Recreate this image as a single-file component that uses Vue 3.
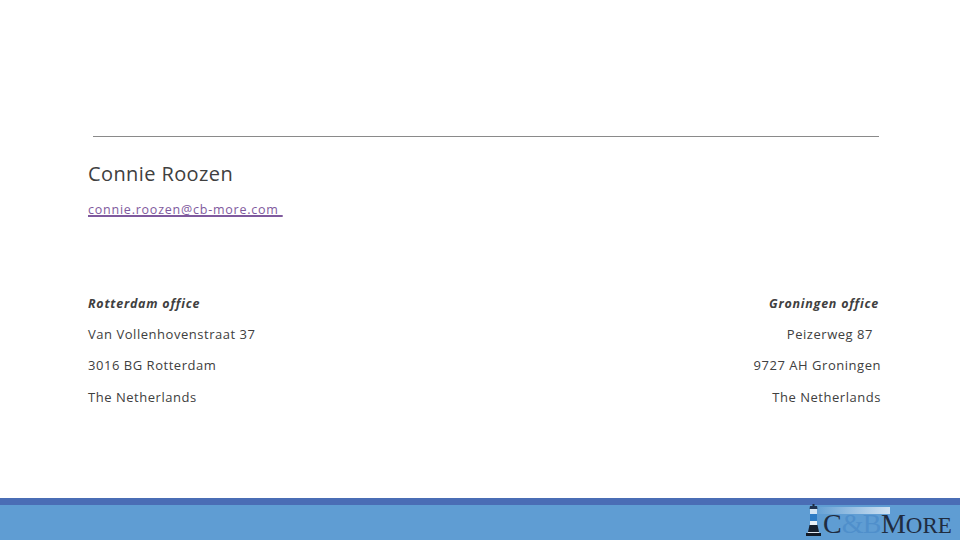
<script setup>
const left = ['Van Vollenhovenstraat 37', '3016 BG Rotterdam', 'The Netherlands']
const right = [
  { text: 'Peizerweg 87', cls: 'r-street' },
  { text: '9727 AH Groningen', cls: 'r-city' },
  { text: 'The Netherlands', cls: 'r-country' }
]
</script>

<template>
  <div class="slide">
    <main class="content">
      <div class="rule"></div>
      <h1 class="name">Connie Roozen</h1>
      <a class="mail" href="#">connie.roozen@cb-more.com </a>
      <section class="offices">
        <div class="office">
          <div class="line head">Rotterdam office</div>
          <div v-for="l in left" :key="l" class="line">{{ l }}</div>
        </div>
        <div class="office right">
          <div class="line head r-head">Groningen office</div>
          <div v-for="l in right" :key="l.text" class="line" :class="l.cls">{{ l.text }}</div>
        </div>
      </section>
    </main>
    <footer class="footer">
      <div class="band"></div>
      <div class="bar">
        <div class="logo">
          <div class="sheen"></div>
          <svg class="tower" width="17" height="32" viewBox="0 0 17 32">
            <path d="M7.5 0h2v2h-2z" fill="#1e2a3c"/>
            <path d="M5 2h7l.5 3h-8z" fill="#1f3350"/>
            <path d="M5 5h7v5H5z" fill="#d5e6f4"/>
            <path d="M5 10h7v7H5z" fill="#2f7cc4"/>
            <path d="M5 17h7v4H5z" fill="#e8f0f7"/>
            <path d="M4.5 21h8l1.5 7H3z" fill="#16202e"/>
            <path d="M3 28h11l.5 1h-12z" fill="#dfe7f0"/>
            <path d="M1 29h15v3H1z" fill="#121a26"/>
          </svg>
          <div class="word"><span class="c">C</span><span class="amp">&amp;B</span><span class="m">M</span><span class="ore">ORE</span></div>
        </div>
      </div>
    </footer>
  </div>
</template>

<style>
html, body { margin: 0; padding: 0; background: #fff; }
</style>

<style scoped>
.slide {
  width: 960px;
  height: 540px;
  display: flex;
  flex-direction: column;
  background: #fff;
  overflow: hidden;
  font-family: "Open Sans", "DejaVu Sans", sans-serif;
  color: #404040;
}
.content {
  flex: 1;
  padding: 136px 81px 0 88px;
  display: flex;
  flex-direction: column;
}
.rule {
  height: 1px;
  background: #8a8a8a;
  margin-left: 5px;
}
.name {
  margin: 22.5px 0 0;
  font-size: 20px;
  line-height: 27px;
  font-weight: 400;
  letter-spacing: 0.4px;
  color: #404040;
}
.mail {
  margin-top: 14px;
  align-self: flex-start;
  font-size: 12.5px;
  line-height: 17px;
  letter-spacing: 0.77px;
  color: #7f5a9e;
  white-space: pre;
  text-decoration: underline;
  text-decoration-thickness: 2px;
  text-decoration-skip-ink: none;
}
.offices {
  margin-top: 77px;
  display: flex;
  justify-content: space-between;
  margin-right: -2px;
}
.office { display: flex; flex-direction: column; }
.office.right { align-items: flex-end; }
.line {
  font-size: 13px;
  line-height: 18px;
  margin-bottom: 13.6px;
  letter-spacing: 0.53px;
  white-space: pre;
}
.head {
  font-style: italic;
  font-weight: 700;
  font-size: 12.5px;
  letter-spacing: 0.75px;
  margin-bottom: 12.3px;
}
.r-head { margin-right: 2px; }
.r-street { margin-right: 8px; }
.footer { height: 42px; display: flex; flex-direction: column; }
.band { height: 7px; background: #4a6db5; }
.bar {
  flex: 1;
  background: #5f9dd3;
  position: relative;
}
.logo {
  position: absolute;
  left: 805px;
  top: -1px;
  width: 150px;
  height: 32px;
  display: flex;
  align-items: flex-end;
}
.sheen {
  position: absolute;
  left: 8px;
  top: 3px;
  width: 77px;
  height: 7px;
  background: linear-gradient(90deg, #5f9dd3, #cfe2f2);
}
.tower { position: relative; flex: none; }
.word {
  position: relative;
  font-family: "Liberation Serif", serif;
  line-height: 22px;
  color: #1f2c40;
  white-space: pre;
  margin-left: 1px;
  margin-bottom: -3px;
}
.c { font-size: 28px; }
.amp { font-size: 28px; color: #4f8fcb; letter-spacing: -0.6px; }
.m { font-size: 28px; }
.ore { font-size: 23px; }
</style>
